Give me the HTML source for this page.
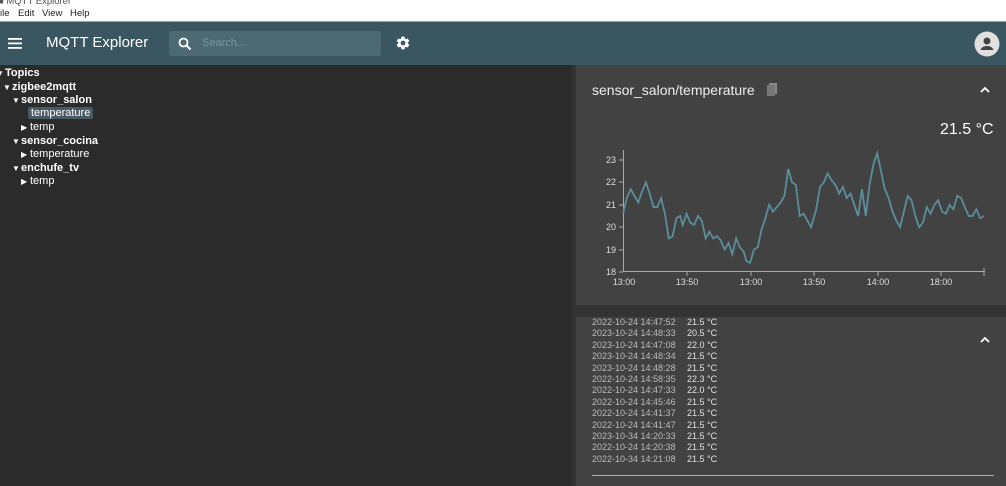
<!DOCTYPE html>
<html><head><meta charset="utf-8"><style>
*{margin:0;padding:0;box-sizing:border-box}
html,body{width:1006px;height:486px;overflow:hidden}
body{background:#2b2b2b;font-family:"Liberation Sans",sans-serif;position:relative}
.menu{position:absolute;left:0;top:0;width:1006px;height:21px;background:#fff;font-size:9.5px;color:#222}
.menu span{position:absolute;top:8px}
.hdr{position:absolute;left:0;top:21px;width:1006px;height:44px;background:#3a5660;border-top:1px solid #8aa}
.t{position:absolute;color:#fff;white-space:nowrap}
.left div{position:absolute;color:#fff;font-size:11px;font-weight:bold;white-space:nowrap}
.tri{font-size:8px;display:inline-block;width:9px}
.right{position:absolute;left:576px;top:65px;width:430px;height:421px;background:#424242}
.row{position:absolute;font-size:9px;color:#bbb;white-space:nowrap;width:150px}
.row b{position:absolute;left:95px;font-weight:normal;color:#e2e2e2}
</style></head><body>
<div class="menu"><span style="left:-2px;top:-4px;color:#555">■ MQTT Explorer</span><span style="left:0">ile</span><span style="left:18px">Edit</span><span style="left:42px">View</span><span style="left:70px">Help</span></div>
<div class="hdr">
<svg style="position:absolute;left:8px;top:16px" width="14" height="11"><rect y="0" width="14" height="1.8" fill="#fff"/><rect y="4.5" width="14" height="1.8" fill="#fff"/><rect y="9" width="14" height="1.8" fill="#fff"/></svg>
<div class="t" style="left:46px;top:12px;font-size:15px">MQTT Explorer</div>
<div style="position:absolute;left:169px;top:9px;width:212px;height:25px;background:#4d6a74;border-radius:3px">
<svg style="position:absolute;left:9px;top:6px" width="14" height="14"><circle cx="5.5" cy="5.5" r="4" stroke="#fff" stroke-width="1.8" fill="none"/><line x1="8.5" y1="8.5" x2="12.5" y2="12.5" stroke="#fff" stroke-width="2"/></svg>
<div style="position:absolute;left:33px;top:6px;font-size:11px;color:#7d959c">Search...</div></div>
<svg style="position:absolute;left:395px;top:13px" width="16" height="16" viewBox="0 0 24 24"><path fill="#fff" d="M19.14 12.94c.04-.3.06-.61.06-.94 0-.32-.02-.64-.07-.94l2.030-1.580a.49.49 0 0 0 .12-.61l-1.920-3.320a.49.49 0 0 0-.59-.22l-2.390.96c-.5-.38-1.030-.7-1.620-.94l-.36-2.540a.48.48 0 0 0-.48-.41h-3.840c-.24 0-.43.17-.47.41l-.36 2.540c-.59.24-1.130.57-1.620.94l-2.390-.96a.48.48 0 0 0-.59.22L2.74 8.87c-.12.21-.08.47.12.61l2.030 1.580c-.05.3-.09.63-.09.94s.02.64.07.94l-2.030 1.580a.49.49 0 0 0-.12.61l1.920 3.320c.12.22.37.29.59.22l2.390-.96c.5.38 1.030.7 1.620.94l.36 2.540c.05.24.24.41.48.41h3.840c.24 0 .44-.17.47-.41l.36-2.540c.59-.24 1.130-.56 1.620-.94l2.390.96c.22.08.47 0 .59-.22l1.920-3.320c.12-.22.07-.47-.12-.61l-2.010-1.580zM12 15.6A3.6 3.6 0 1 1 12 8.4a3.6 3.6 0 0 1 0 7.2z"/></svg>
<svg style="position:absolute;left:974px;top:9px" width="26" height="26"><circle cx="13" cy="13" r="12.5" fill="#e0e0e0"/><circle cx="13" cy="10" r="3.5" fill="#444"/><path d="M6.5 19c1-3 4-4 6.5-4s5.5 1 6.5 4z" fill="#444"/></svg>
</div>
<div class="left">
<div style="left:-4px;top:67px"><span class="tri">▼</span>Topics</div>
<div style="left:3px;top:81px"><span class="tri">▼</span>zigbee2mqtt</div>
<div style="left:12px;top:94px"><span class="tri">▼</span>sensor_salon</div>
<div style="left:28px;top:107px;background:#4a5a63;padding:0 3px;border-radius:2px;font-weight:normal">temperature</div>
<div style="left:21px;top:121px;font-weight:normal"><span class="tri">▶</span>temp</div>
<div style="left:12px;top:135px"><span class="tri">▼</span>sensor_cocina</div>
<div style="left:21px;top:148px;font-weight:normal"><span class="tri">▶</span>temperature</div>
<div style="left:12px;top:162px"><span class="tri">▼</span>enchufe_tv</div>
<div style="left:21px;top:175px;font-weight:normal"><span class="tri">▶</span>temp</div>
</div>
<div style="position:absolute;left:572px;top:65px;width:4px;height:421px;background:#333"></div>
<div class="right">
<div class="t" style="left:16px;top:17px;font-size:14px;color:#eee">sensor_salon/temperature</div>
<svg style="position:absolute;left:191px;top:18px" width="11" height="13"><rect x="2" y="0" width="8" height="11" fill="#888"/><rect x="0" y="2" width="8" height="11" fill="#777"/></svg>
<svg style="position:absolute;left:404px;top:21px" width="10" height="8"><path d="M1 6L5 2L9 6" stroke="#fff" stroke-width="1.8" fill="none"/></svg>
<div class="t" style="left:364px;top:56px;font-size:16px">21.5 °C</div>
<div style="position:absolute;left:0;top:240px;width:430px;height:12px;background:#333"></div>
<svg style="position:absolute;left:404px;top:271px" width="10" height="8"><path d="M1 6L5 2L9 6" stroke="#fff" stroke-width="1.8" fill="none"/></svg>
<div style="position:absolute;left:16px;top:410px;width:402px;height:1px;background:#aaa"></div>
</div>
<svg style="position:absolute;left:0;top:0" width="1006" height="486">
<g stroke="#aaa" stroke-width="1" fill="none"><line x1="623.5" y1="150" x2="623.5" y2="272"/><line x1="623" y1="271.5" x2="985" y2="271.5"/>
<line x1="619" y1="160" x2="623" y2="160"/><line x1="619" y1="182" x2="623" y2="182"/><line x1="619" y1="205" x2="623" y2="205"/><line x1="619" y1="227" x2="623" y2="227"/><line x1="619" y1="250" x2="623" y2="250"/><line x1="619" y1="272" x2="623" y2="272"/>
<line x1="687" y1="272" x2="687" y2="276"/><line x1="751" y1="272" x2="751" y2="276"/><line x1="814" y1="272" x2="814" y2="276"/><line x1="878" y1="272" x2="878" y2="276"/><line x1="941" y1="272" x2="941" y2="276"/><line x1="984" y1="268" x2="984" y2="276"/></g>
<g fill="#ddd" font-size="9" font-family="Liberation Sans" text-anchor="end"><text x="616" y="163">23</text><text x="616" y="185">22</text><text x="616" y="208">21</text><text x="616" y="230">20</text><text x="616" y="253">19</text><text x="616" y="275">18</text></g>
<g fill="#ddd" font-size="9" font-family="Liberation Sans" text-anchor="middle"><text x="624" y="285">13:00</text><text x="687" y="285">13:50</text><text x="751" y="285">13:00</text><text x="814" y="285">13:50</text><text x="878" y="285">14:00</text><text x="941" y="285">18:00</text></g>
<path transform="matrix(1.271,0,0,-22.4,623,675.2)" vector-effect="non-scaling-stroke" stroke="#5a8e9a" stroke-width="1.8" fill="none" d="M0 20.6L3 21.3L6 21.7L9 21.4L12 21.1L15 21.6L18 22L21 21.5L24 20.9L27 20.9L30 21.3L33 20.6L36 19.5L39 19.6L42 20.4L45 20.5L47 20.1L50 20.6L53 20.2L56 20.1L59 20.5L62 20.3L65 19.5L68 19.8L71 19.5L74 19.6L77 19.4L80 19L83 19.3L86 18.8L89 19.5L92 19.1L95 18.9L97 18.5L100 18.4L103 19L106 19.1L109 19.9L112 20.4L115 21L118 20.7L121 20.9L124 21.1L127 21.4L130 22.6L133 22L136 21.9L139 20.5L142 20.6L145 20.3L148 20L152 20.8L155 21.8L158 22L161 22.4L164 22.1L167 21.9L170 21.5L173 21.8L176 21.3L179 21.5L182 21L185 20.5L188 21.7L191 20.5L194 21.9L197 22.8L200 23.3L203 22.5L206 21.7L209 21.3L212 20.7L215 20.3L218 20L221 20.7L224 21.4L227 21.2L230 20.5L233 20L236 20.2L239 20.9L242 20.6L245 21L248 21.2L251 20.7L254 20.6L257 21L260 20.8L263 21.4L266 21.3L269 20.9L272 20.5L275 20.5L278 20.8L281 20.4L284 20.5"/>
</svg>
<div style="position:absolute;left:592px;top:317px">
<div class="row" style="top:0">2022-10-24 14:47:52<b>21.5 °C</b></div>
<div class="row" style="top:11.4px">2023-10-24 14:48:33<b>20.5 °C</b></div>
<div class="row" style="top:22.8px">2023-10-24 14:47:08<b>22.0 °C</b></div>
<div class="row" style="top:34.2px">2023-10-24 14:48:34<b>21.5 °C</b></div>
<div class="row" style="top:45.6px">2023-10-24 14:48:28<b>21.5 °C</b></div>
<div class="row" style="top:57px">2022-10-24 14:58:35<b>22.3 °C</b></div>
<div class="row" style="top:68.4px">2022-10-24 14:47:33<b>22.0 °C</b></div>
<div class="row" style="top:79.8px">2022-10-24 14:45:46<b>21.5 °C</b></div>
<div class="row" style="top:91.2px">2022-10-24 14:41:37<b>21.5 °C</b></div>
<div class="row" style="top:102.6px">2022-10-24 14:41:47<b>21.5 °C</b></div>
<div class="row" style="top:114px">2023-10-34 14:20:33<b>21.5 °C</b></div>
<div class="row" style="top:125.4px">2022-10-24 14:20:38<b>21.5 °C</b></div>
<div class="row" style="top:136.8px">2022-10-34 14:21:08<b>21.5 °C</b></div>
</div>
</body></html>
